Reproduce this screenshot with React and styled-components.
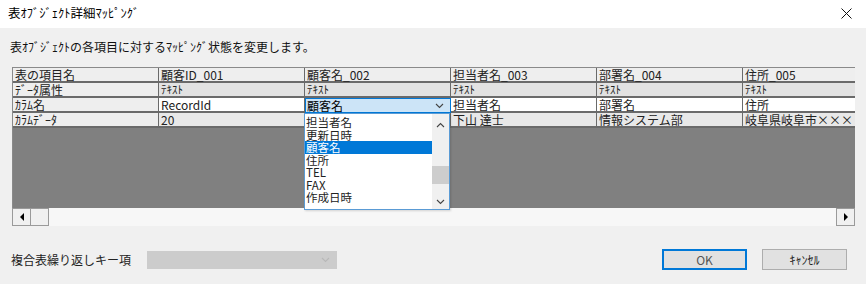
import React from "react";
import styled, { createGlobalStyle } from "styled-components";

const GlobalStyle = createGlobalStyle`
  html, body {
    margin: 0;
    padding: 0;
    background: #f0f0f0;
    font-family: "Noto Sans CJK JP", "Noto Sans", sans-serif;
    color: #000;
  }
`;

const columns = [
  { name: "顧客ID_001", type: "ﾃｷｽﾄ", column: "RecordId", data: "20" },
  { name: "顧客名_002", type: "ﾃｷｽﾄ", column: "顧客名", data: "", editing: true },
  { name: "担当者名_003", type: "ﾃｷｽﾄ", column: "担当者名", data: "下山 達士" },
  { name: "部署名_004", type: "ﾃｷｽﾄ", column: "部署名", data: "情報システム部" },
  { name: "住所_005", type: "ﾃｷｽﾄ", column: "住所", data: "岐阜県岐阜市×××" },
];

const rows = [
  { label: "表の項目名", key: "name", kind: "head" },
  { label: "ﾃﾞｰﾀ属性", key: "type", kind: "type" },
  { label: "ｶﾗﾑ名", key: "column", kind: "edit" },
  { label: "ｶﾗﾑﾃﾞｰﾀ", key: "data", kind: "data" },
];

const options = ["担当者名", "更新日時", "顧客名", "住所", "TEL", "FAX", "作成日時"];

const rowBg = { head: "#eeeeee", type: "#e2e2e2", edit: "#ffffff", data: "#e8e8e8" };

function Chevron({ up, color = "#444" }) {
  return (
    <svg width="9" height="6" viewBox="0 0 9 6">
      <polyline
        points={up ? "1,5 4.5,1.5 8,5" : "1,1 4.5,4.5 8,1"}
        fill="none"
        stroke={color}
        strokeWidth="1.1"
      />
    </svg>
  );
}

function App() {
  return (
    <>
      <GlobalStyle />
      <Window>
        <TitleBar>
          <Title>表ｵﾌﾞｼﾞｪｸﾄ詳細ﾏｯﾋﾟﾝｸﾞ</Title>
          <Close>
            <svg width="11" height="11" viewBox="0 0 11 11">
              <path d="M0.5 0.5 L10.5 10.5 M10.5 0.5 L0.5 10.5" stroke="#111" strokeWidth="1" />
            </svg>
          </Close>
        </TitleBar>
        <Body>
          <Description>表ｵﾌﾞｼﾞｪｸﾄの各項目に対するﾏｯﾋﾟﾝｸﾞ状態を変更します。</Description>
          <GridFrame>
            <GridClip>
              {rows.map((r) => (
                <Row key={r.key}>
                  <Cell $bg="#eeeeee">{r.label}</Cell>
                  {columns.map((c) =>
                    r.kind === "edit" && c.editing ? (
                      <ComboCell key={c.name}>
                        <span>{c.column}</span>
                        <Chevron />
                      </ComboCell>
                    ) : (
                      <Cell key={c.name} $bg={rowBg[r.kind]} $small={r.kind === "type"}>
                        {c[r.key]}
                      </Cell>
                    )
                  )}
                </Row>
              ))}
              <EmptyArea />
            </GridClip>
            <HScroll>
              <ArrowBtn>
                <Tri $dir="left" />
              </ArrowBtn>
              <Thumb />
              <Track />
              <ArrowBtn>
                <Tri $dir="right" />
              </ArrowBtn>
            </HScroll>
            <DropList>
              <Options>
                {options.map((o) => (
                  <Option key={o} $selected={o === "顧客名"}>
                    {o}
                  </Option>
                ))}
              </Options>
              <VScroll>
                <Chevron up />
                <VThumb />
                <Chevron />
              </VScroll>
            </DropList>
          </GridFrame>
          <Footer>
            <FooterLabel>複合表繰り返しキー項</FooterLabel>
            <DisabledCombo>
              <Chevron color="#b8b8b8" />
            </DisabledCombo>
            <Spacer />
            <Button $primary>OK</Button>
            <Button>ｷｬﾝｾﾙ</Button>
          </Footer>
        </Body>
      </Window>
    </>
  );
}

const Window = styled.div`
  width: 866px;
  height: 284px;
  display: flex;
  flex-direction: column;
  overflow: hidden;
`;

const TitleBar = styled.div`
  height: 28px;
  background: #ffffff;
  display: flex;
  align-items: center;
  justify-content: space-between;
  padding: 0 14px 0 8px;
  flex-shrink: 0;
`;

const Title = styled.div`
  font-size: 12.5px;
  line-height: 16px;
  margin-top: -2px;
`;

const Close = styled.div`
  display: flex;
  margin-top: -2px;
`;

const Body = styled.div`
  flex: 1;
  display: flex;
  flex-direction: column;
  padding: 10px 11px 0 12px;
`;

const Description = styled.div`
  font-size: 12px;
  line-height: 18px;
  margin-left: -2px;
  color: #111;
`;

const GridFrame = styled.div`
  position: relative;
  margin-top: 11px;
  width: 843px;
`;

const GridClip = styled.div`
  width: 843px;
  overflow: hidden;
  border-top: 1px solid #8a8a8a;
  border-left: 1px solid #8a8a8a;
  box-sizing: border-box;
`;

const Row = styled.div`
  display: flex;
  height: 15px;
  border-bottom: 2px solid #6a6a6a;
  box-sizing: border-box;
  width: 876px;
`;

const Cell = styled.div`
  width: 146px;
  flex-shrink: 0;
  box-sizing: border-box;
  border-right: 1px solid #6a6a6a;
  background: ${(p) => p.$bg};
  font-size: ${(p) => (p.$small ? "11px" : "12px")};
  line-height: 13px;
  padding-left: 2px;
  white-space: nowrap;
  color: #222;
`;

const ComboCell = styled.div`
  width: 146px;
  flex-shrink: 0;
  box-sizing: border-box;
  background: #cce4f7;
  border: 1px solid #0078d7;
  margin-bottom: -2px;
  height: 15px;
  display: flex;
  align-items: center;
  justify-content: space-between;
  padding: 0 6px 0 1px;
  font-size: 12px;
  line-height: 13px;
`;

const EmptyArea = styled.div`
  height: 80px;
  background: #808080;
`;

const HScroll = styled.div`
  display: flex;
  height: 18px;
  background: #f7f7f7;
`;

const ArrowBtn = styled.div`
  width: 19px;
  height: 18px;
  box-sizing: border-box;
  border: 1px solid #9a9a9a;
  background: #f0f0f0;
  display: flex;
  align-items: center;
  justify-content: center;
`;

const Thumb = styled.div`
  width: 18px;
  height: 18px;
  box-sizing: border-box;
  border: 1px solid #9a9a9a;
  border-left: none;
  background: #f0f0f0;
`;

const Track = styled.div`
  flex: 1;
`;

const Tri = styled.div`
  width: 0;
  height: 0;
  border-top: 4px solid transparent;
  border-bottom: 4px solid transparent;
  ${(p) =>
    p.$dir === "left"
      ? "border-right: 4px solid #000;"
      : "border-left: 4px solid #000;"}
`;

const DropList = styled.div`
  position: absolute;
  left: 292px;
  top: 46px;
  width: 146px;
  height: 97px;
  box-sizing: border-box;
  border: 1px solid #5a9bd5;
  background: #ffffff;
  display: flex;
  box-shadow: 1px 1px 2px rgba(0, 0, 0, 0.15);
`;

const Options = styled.div`
  flex: 1;
  padding-top: 2px;
`;

const Option = styled.div`
  height: 12.5px;
  line-height: 12.5px;
  font-size: 11.5px;
  padding-left: 1px;
  color: ${(p) => (p.$selected ? "#fff" : "#222")};
  background: ${(p) => (p.$selected ? "#0078d7" : "transparent")};
`;

const VScroll = styled.div`
  width: 17px;
  background: #f0f0f0;
  display: flex;
  flex-direction: column;
  align-items: center;
  padding: 8px 0 4px;
  box-sizing: border-box;
  svg:last-child {
    margin-top: auto;
  }
`;

const VThumb = styled.div`
  width: 17px;
  height: 18px;
  background: #cdcdcd;
  margin-top: 38px;
`;

const Footer = styled.div`
  display: flex;
  align-items: center;
  margin-top: 23px;
  height: 21px;
`;

const FooterLabel = styled.div`
  font-size: 12px;
  color: #222;
  margin-left: -1px;
  width: 136px;
`;

const DisabledCombo = styled.div`
  width: 190px;
  height: 18px;
  background: #cccccc;
  display: flex;
  align-items: center;
  justify-content: flex-end;
  padding-right: 7px;
  box-sizing: border-box;
`;

const Spacer = styled.div`
  flex: 1;
`;

const Button = styled.div`
  width: 85px;
  height: 21px;
  box-sizing: border-box;
  background: #e1e1e1;
  border: ${(p) => (p.$primary ? "2px solid #0078d7" : "1px solid #adadad")};
  display: flex;
  align-items: center;
  justify-content: center;
  font-size: 12px;
  color: ${(p) => (p.$primary ? "#555" : "#222")};
  margin-left: ${(p) => (p.$primary ? "0" : "15px")};
  margin-right: ${(p) => (p.$primary ? "0" : "8px")};
`;

export default App;
